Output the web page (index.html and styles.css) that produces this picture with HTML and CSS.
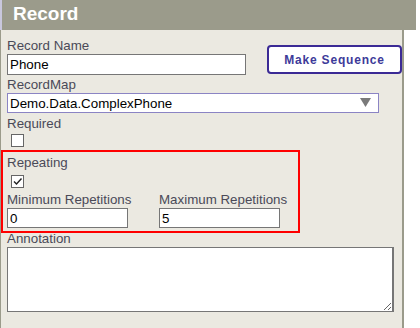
FILE: index.html
```html
<!DOCTYPE html>
<html>
<head>
<meta charset="utf-8">
<link rel="stylesheet" href="styles.css">
</head>
<body>
<div class="header"><h1 class="title">Record</h1></div>
<div class="panel">
  <div class="row-top">
    <div class="field">
      <label class="lbl">Record Name</label>
      <input class="txt name" type="text" value="Phone">
    </div>
    <button class="seq">Make Sequence</button>
  </div>
  <label class="lbl gap2">RecordMap</label>
  <div class="select-wrap">
    <select class="sel"><option>Demo.Data.ComplexPhone</option></select>
    <svg class="arrow" width="11" height="10" viewBox="0 0 11 10"><polygon points="0,0 11,0 5.5,9" fill="#7a7a7a"/></svg>
  </div>
  <label class="lbl gap3">Required</label>
  <span class="cb cb-req"></span>
  <div class="repeat">
    <label class="lbl">Repeating</label>
    <span class="cb cb-rep"><svg width="11" height="11" viewBox="0 0 11 11"><polyline points="2,5.5 4.5,8 9.5,2.5" fill="none" stroke="#222" stroke-width="1.4"/></svg></span>
    <div class="reps">
      <div class="field rep-field">
        <label class="lbl">Minimum Repetitions</label>
        <input class="txt num" type="text" value="0">
      </div>
      <div class="field rep-field max">
        <label class="lbl">Maximum Repetitions</label>
        <input class="txt num" type="text" value="5">
      </div>
    </div>
  </div>
  <label class="lbl annot">Annotation</label>
  <textarea class="notes"></textarea>
</div>
</body>
</html>
```
FILE: styles.css
```css
html, body {
  margin: 0;
  padding: 0;
  background: #ffffff;
}
body {
  font-family: "Liberation Sans", Arial, sans-serif;
  font-size: 13.33px;
}
.header {
  width: 414px;
  height: 30px;
  background: #9b9b8b;
  border-left: 2px solid #c9c7dd;
}
.title {
  margin: 0;
  padding-left: 11px;
  font-size: 19px;
  font-weight: bold;
  line-height: 27px;
  color: #ffffff;
}
.panel {
  box-sizing: border-box;
  width: 404px;
  height: 298px;
  background: #ebe9e1;
  border-left: 1px solid #9b9b8b;
  border-right: 2px solid #9b9b8b;
  padding: 8px 0 0 6px;
}
.lbl {
  display: block;
  font-size: 13.33px;
  line-height: 16px;
  color: #4a4a58;
  white-space: nowrap;
}
.gap2 { margin-top: 2px; }
.gap3 { margin-top: 3px; }
.row-top {
  display: flex;
  align-items: flex-start;
}
.txt {
  display: block;
  box-sizing: border-box;
  border: 1px solid #767676;
  background: #ffffff;
  font-family: "Liberation Sans", Arial, sans-serif;
  font-size: 13.33px;
  color: #000000;
  padding: 0 2px;
  margin: 0;
  outline: none;
}
.name {
  width: 239px;
  height: 21px;
}
.seq {
  box-sizing: border-box;
  width: 144px;
  height: 29px;
  margin: 7px 0 0 21px;
  background: #ffffff;
  border: 2px solid #3b2a95;
  border-radius: 4px;
  font-family: "Liberation Sans", Arial, sans-serif;
  font-size: 12px;
  font-weight: bold;
  letter-spacing: 0.8px;
  color: #3d3a99;
  padding: 0;
}
.select-wrap {
  position: relative;
  box-sizing: border-box;
  width: 372px;
  height: 20px;
  border: 1px solid #8b84c4;
  background: #ffffff;
}
.sel {
  appearance: none;
  -webkit-appearance: none;
  display: block;
  width: 100%;
  height: 18px;
  border: none;
  background: transparent;
  font-family: "Liberation Sans", Arial, sans-serif;
  font-size: 13.33px;
  color: #000000;
  padding: 0 2px;
  margin: 0;
  outline: none;
}
.arrow {
  position: absolute;
  left: 352px;
  top: 4px;
}
.cb {
  display: block;
  box-sizing: border-box;
  width: 13px;
  height: 13px;
  margin-left: 4px;
  border: 1px solid #666666;
  background: #ffffff;
}
.cb svg { display: block; }
.cb-req { margin-top: 2px; }
.cb-rep { margin-top: 4px; }
.repeat {
  position: relative;
  z-index: 1;
  box-sizing: border-box;
  width: 299px;
  margin: 3px 0 0 -6px;
  border: 2px solid #ff0000;
  padding: 3px 0 3px 4px;
}
.reps {
  display: flex;
  margin-top: 4px;
}
.rep-field {
  flex: none;
  width: 121px;
}
.num {
  width: 121px;
  height: 20px;
}
.max { margin-left: 31px; }
.annot { margin-top: -2px; }
.notes {
  display: block;
  box-sizing: border-box;
  width: 387px;
  height: 65px;
  margin: 0;
  border: 1px solid #767676;
  border-right-width: 2px;
  background: #ffffff;
  resize: both;
  font-family: "Liberation Sans", Arial, sans-serif;
  font-size: 13px;
  outline: none;
}
```
